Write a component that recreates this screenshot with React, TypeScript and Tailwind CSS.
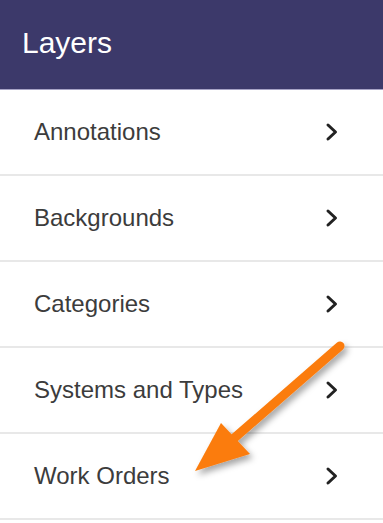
import React from "react";

const items = ["Annotations", "Backgrounds", "Categories", "Systems and Types", "Work Orders"];

const Chevron = () => (
  <svg width="14" height="20" viewBox="0 0 14 20" className="mr-[44px]">
    <path d="M3 3 L10.5 10 L3 17" fill="none" stroke="#222" strokeWidth="3" strokeLinecap="round" strokeLinejoin="round" />
  </svg>
);

const App = () => {
  return (
    <div className="relative w-[383px] h-[523px] bg-white overflow-hidden" style={{ fontFamily: '"Liberation Sans", Arial, sans-serif' }}>
      <div className="h-[90px] bg-[#3c396a] border-b border-[#a7a3c6] flex items-center pl-[22px]">
        <h2 className="text-[30px] text-white -mt-[4px]">Layers</h2>
      </div>
      {items.map((name) => (
        <div key={name} className="h-[86px] border-b-2 border-[#e8e8e8] flex items-center justify-between pl-[34px]">
          <span className="text-[24px] text-[#3c3c3c]">{name}</span>
          <Chevron />
        </div>
      ))}
      {/* callout arrow */}
      <svg className="absolute left-0 top-0 pointer-events-none" width="383" height="523">
        <defs>
          <filter id="sh" x="-20%" y="-20%" width="140%" height="140%">
            <feDropShadow dx="3" dy="4" stdDeviation="3" floodColor="#000" floodOpacity="0.35" />
          </filter>
        </defs>
        <g filter="url(#sh)" fill="#fb7c0b">
          <line x1="340" y1="346" x2="232" y2="440" stroke="#fb7c0b" strokeWidth="9" strokeLinecap="round" />
          <polygon points="221,423 250,454 195,471" />
        </g>
      </svg>
    </div>
  );
};

export default App;
